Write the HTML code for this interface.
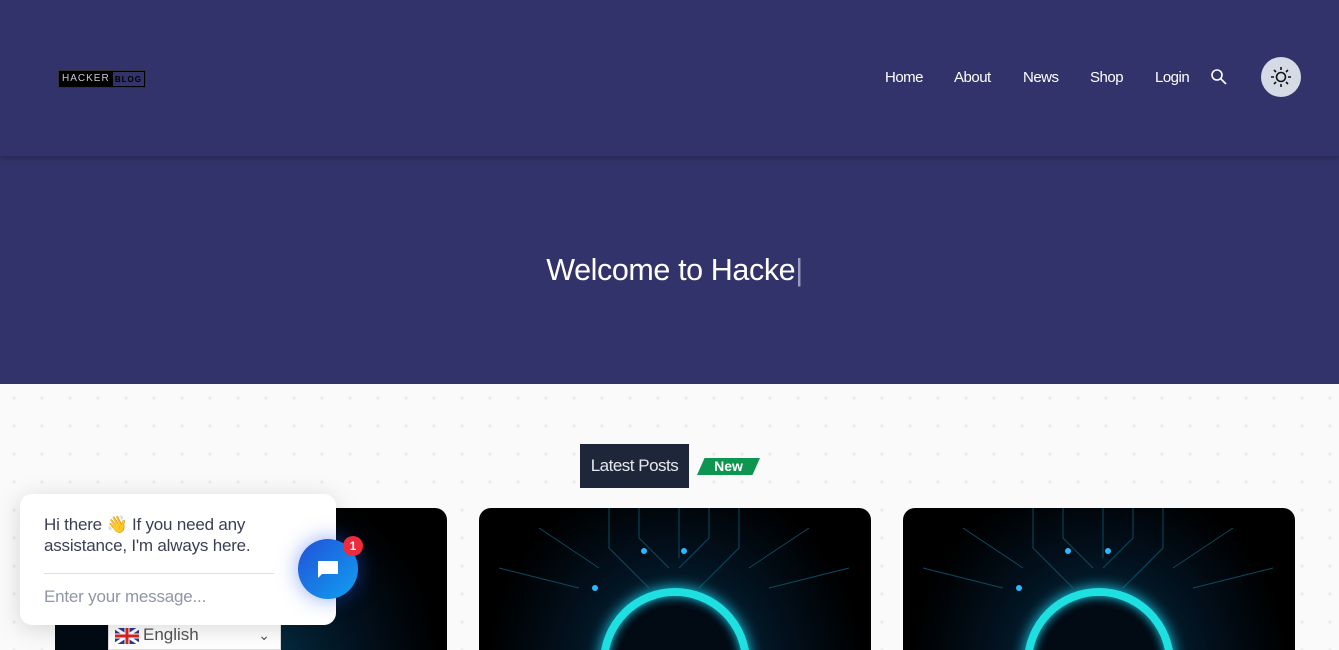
<!DOCTYPE html>
<html style="width:1339px;height:650px;overflow:hidden"><head><meta charset="utf-8"><style>
*{margin:0;padding:0;box-sizing:border-box}
body{width:1339px;height:650px;overflow:hidden;font-family:"Liberation Sans",sans-serif;background:#fff;position:relative}
.hdr{position:absolute;left:0;top:0;width:1339px;height:156px;background:#32336a;box-shadow:0 2px 6px rgba(0,0,0,.25);z-index:2}
.hero{position:absolute;left:0;top:156px;width:1339px;height:228px;background:#32336a}
.logo{position:absolute;left:58px;top:70px;height:18px;width:88px;background:#000;border:1px solid #333;font-size:10px;color:#c8c9de;letter-spacing:1px;line-height:16px;padding-left:3px}
.logo span{position:absolute;right:1px;top:1px;height:14px;line-height:15px;background:#32336a;color:#000;padding:0 2px;font-size:8px;font-weight:bold}
.nav a{position:absolute;top:69px;color:#fff;font-size:15px;text-decoration:none;letter-spacing:-.5px}
.sun{position:absolute;left:1261px;top:57px;width:40px;height:40px;border-radius:50%;background:#d4dbe5}
h1{position:absolute;top:253px;left:0;width:1339px;text-align:center;color:#fff;font-weight:normal;font-size:30.5px;letter-spacing:-.4px;padding-left:10px}
.bgpat{position:absolute;left:0;top:384px;width:1339px;height:266px;background:#fafafa;background-image:radial-gradient(circle,#ececec 1.5px,transparent 2px);background-size:28px 28px}
.lp{position:absolute;left:580px;top:444px;width:109px;height:44px;background:#1d2739;color:#e6e8ee;font-size:17px;line-height:44px;text-align:center;letter-spacing:-.5px}
.new{position:absolute;left:697px;top:458px;width:63px;height:17px;background:#0c9650;clip-path:polygon(12% 0,100% 0,88% 100%,0 100%);color:#fff;font-weight:bold;font-size:14px;text-align:center;line-height:17px}
.card{position:absolute;top:508px;width:392px;height:142px;border-radius:12px 12px 0 0;background:radial-gradient(circle at 50% 110%,#06324a 0,#02101c 45%,#000 75%);overflow:hidden}
.ring{position:absolute;left:121px;top:80px;width:150px;height:150px;border-radius:50%;border:8px solid #1fe0e0;box-shadow:0 0 14px #1ad4f0,inset 0 0 10px #1ad4f0;background:#020a14}
.chat{position:absolute;left:20px;top:494px;width:316px;height:131px;background:#fff;border-radius:12px;box-shadow:0 4px 24px rgba(0,0,0,.15);z-index:3}
.chat p{position:absolute;left:24px;top:20px;font-size:17px;color:#3a3f55;line-height:21px;width:240px;letter-spacing:-.2px}
.chat hr{position:absolute;left:24px;top:79px;width:230px;border:0;border-top:1px solid #ddd}
.chat .in{position:absolute;left:24px;top:93px;font-size:17px;color:#8f96a8;letter-spacing:-.2px}
.btn{position:absolute;left:298px;top:539px;width:60px;height:60px;border-radius:50%;background:linear-gradient(135deg,#2350d8,#0fa0f0);box-shadow:0 0 20px rgba(40,90,240,.5);z-index:4}
.badge{position:absolute;left:343px;top:536px;width:20px;height:20px;border-radius:50%;background:#ef2a3a;color:#fff;font-size:12px;font-weight:bold;text-align:center;line-height:20px;z-index:5}
.lang{position:absolute;left:108px;top:618px;width:173px;height:32px;background:#fff;border:1px solid #ddd;z-index:2;font-size:17px;color:#555;line-height:32px;padding-left:34px}
</style></head><body>
<div class="hdr">
<div class="logo">HACKER<span>BLOG</span></div>
<div class="nav"><a style="left:885px">Home</a><a style="left:954px">About</a><a style="left:1023px">News</a><a style="left:1090px">Shop</a><a style="left:1155px">Login</a></div>
<svg style="position:absolute;left:1210px;top:68px" width="18" height="18" viewBox="0 0 18 18"><circle cx="7" cy="7" r="5" stroke="#fff" stroke-width="1.6" fill="none"/><path d="M11 11l5 5" stroke="#fff" stroke-width="1.6"/></svg>
<div class="sun"><svg width="40" height="40" viewBox="0 0 40 40"><circle cx="20" cy="20" r="4.5" stroke="#111" stroke-width="1.6" fill="none"/><g stroke="#111" stroke-width="1.6"><path d="M20 10v3M20 27v3M10 20h3M27 20h3M13 13l2 2M25 25l2 2M27 13l-2 2M13 27l2-2"/></g></svg></div>
</div>
<div class="hero"></div>
<h1>Welcome to Hacke<span style="color:#9a9bc0;font-weight:100">|</span></h1>
<div class="bgpat"></div>
<div class="lp">Latest Posts</div>
<div class="new">New</div>
<div class="card" style="left:55px"><div class="ring" style="left:-60px"></div></div>
<div class="card" style="left:479px"><svg style="position:absolute;left:0;top:0" width="392" height="142"><g stroke="#0b4a60" fill="none"><path d="M130 0v40l40 40M160 0v30l30 30M200 0v50M230 0v30l-30 30M260 0v40l-40 40M60 20l60 40M330 20l-60 40M20 60l80 20M370 60l-80 20"/></g><circle cx="165" cy="43" r="3" fill="#2ab8ff"/><circle cx="205" cy="43" r="3" fill="#2ab8ff"/><circle cx="116" cy="80" r="3" fill="#2ab8ff"/></svg><div class="ring"></div></div>
<div class="card" style="left:903px"><svg style="position:absolute;left:0;top:0" width="392" height="142"><g stroke="#0b4a60" fill="none"><path d="M130 0v40l40 40M160 0v30l30 30M200 0v50M230 0v30l-30 30M260 0v40l-40 40M60 20l60 40M330 20l-60 40M20 60l80 20M370 60l-80 20"/></g><circle cx="165" cy="43" r="3" fill="#2ab8ff"/><circle cx="205" cy="43" r="3" fill="#2ab8ff"/><circle cx="116" cy="80" r="3" fill="#2ab8ff"/></svg><div class="ring"></div></div>
<div class="chat"><p>Hi there 👋 If you need any assistance, I'm always here.</p><hr><div class="in">Enter your message...</div></div>
<div class="btn"><svg width="60" height="60" viewBox="0 0 60 60"><path d="M20 22h20v13H24l-4 4z" fill="#fff"/></svg></div>
<div class="badge">1</div>
<div class="lang"><svg style="position:absolute;left:6px;top:9px" width="24" height="16" viewBox="0 0 24 16"><rect width="24" height="16" fill="#2b3a8a"/><path d="M0 0L24 16M24 0L0 16" stroke="#fff" stroke-width="3"/><path d="M12 0v16M0 8h24" stroke="#fff" stroke-width="5"/><path d="M12 0v16M0 8h24" stroke="#d22" stroke-width="3"/></svg>English<span style="position:absolute;right:10px;font-size:14px">⌄</span></div>
</body></html>
